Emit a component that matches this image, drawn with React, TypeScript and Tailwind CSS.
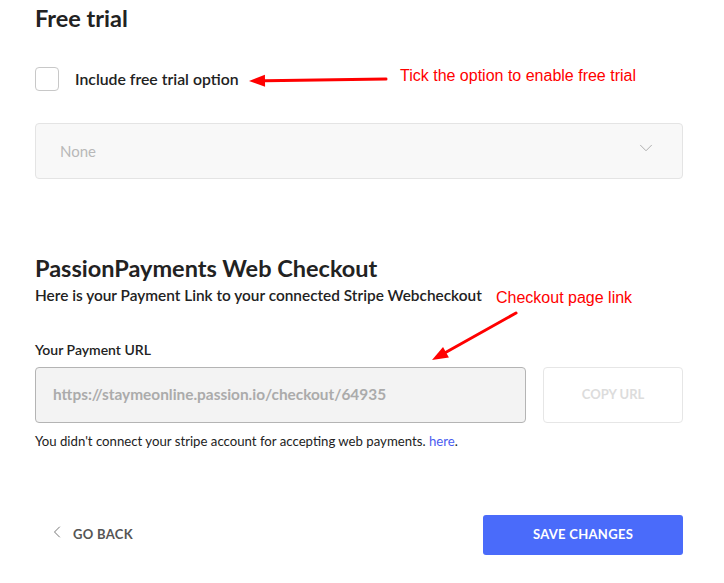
import { ChevronDown, ChevronLeft } from 'lucide-react'

const font = { fontFamily: 'Lato, "Liberation Sans", sans-serif' }

function RedArrow({ x1, y1, x2, y2 }: { x1: number; y1: number; x2: number; y2: number }) {
  // line plus a filled head pointing at (x2, y2)
  const ang = Math.atan2(y2 - y1, x2 - x1)
  const len = 16
  const half = 6
  const bx = x2 - len * Math.cos(ang)
  const by = y2 - len * Math.sin(ang)
  const px = -Math.sin(ang) * half
  const py = Math.cos(ang) * half
  return (
    <g>
      <line x1={x1} y1={y1} x2={bx} y2={by} stroke="#f00" strokeWidth={3} strokeLinecap="round" />
      <polygon points={`${x2},${y2} ${bx + px},${by + py} ${bx - px},${by - py}`} fill="#f00" />
    </g>
  )
}

export default function App() {
  return (
    <div className="relative w-[724px] h-[583px] bg-white text-[#222]" style={font}>
      <div className="pl-[35px] pr-[41px] w-[724px]">
        <h2 className="pt-[3px] text-[23.5px] leading-[30px] font-bold text-[#222]">Free trial</h2>

        <label className="mt-[34px] flex items-center gap-[16px] h-[24px]">
          <span className="w-[24px] h-[24px] rounded-[4px] border border-[#c8c8c8] bg-white" />
          <span className="text-[15.8px] font-semibold text-[#222]">Include free trial option</span>
        </label>

        <div className="mt-[32px] h-[56px] flex items-center justify-between rounded-[4px] border border-[#e4e4e4] bg-[#f8f8f8] pl-[24px] pr-[25px]">
          <span className="text-[15px] text-[#b8b8b8]">None</span>
          <ChevronDown className="w-[22px] h-[22px] text-[#a8a8a8] -mt-[6px]" strokeWidth={1} />
        </div>

        <h2 className="mt-[74px] text-[23.5px] leading-[30px] font-bold text-[#222]">PassionPayments Web Checkout</h2>
        <p className="mt-[2px] text-[15.4px] leading-[20px] font-semibold text-[#222]">
          Here is your Payment Link to your connected Stripe Webcheckout
        </p>

        <p className="mt-[36px] text-[14px] leading-[18px] font-semibold text-[#222]">Your Payment URL</p>

        <div className="mt-[8px] flex gap-[17px]">
          <div className="flex-1 h-[56px] flex items-center rounded-[4px] border border-[#b4b4b4] bg-[#f3f3f3] pl-[17px]">
            <span className="text-[15.4px] font-bold text-[#ababab]">https://staymeonline.passion.io/checkout/64935</span>
          </div>
          <button className="w-[140px] h-[56px] rounded-[4px] border border-[#e6e6e6] bg-white text-[13px] font-bold text-[#dcdcdc] uppercase">
            Copy URL
          </button>
        </div>

        <p className="mt-[9px] text-[13.2px] leading-[18px] text-[#222]">
          You didn't connect your stripe account for accepting web payments.{' '}
          <span className="text-[#4a5cf0]">here</span>.
        </p>

        <div className="mt-[65px] flex items-center justify-between">
          <div className="flex items-center gap-[6px] pl-[12px]">
            <ChevronLeft className="w-[20px] h-[20px] text-[#777] -mt-[6px]" strokeWidth={1.2} />
            <span className="text-[13px] font-bold text-[#555] tracking-[0.3px]">GO BACK</span>
          </div>
          <button className="w-[200px] h-[40px] rounded-[3px] bg-[#4a6bfa] text-white text-[13px] font-bold tracking-[0.3px]">
            SAVE CHANGES
          </button>
        </div>
      </div>

      <svg className="absolute inset-0 pointer-events-none" width={724} height={583}>
        <RedArrow x1={386} y1={79} x2={249} y2={81} />
        <RedArrow x1={516} y1={313} x2={432} y2={360} />
      </svg>
      <span
        className="absolute left-[400px] top-[66px] text-[16px] leading-[20px] text-[#f00]"
        style={{ fontFamily: '"Liberation Sans", Arial, sans-serif' }}
      >
        Tick the option to enable free trial
      </span>
      <span
        className="absolute left-[496px] top-[288px] text-[16px] leading-[20px] text-[#f00]"
        style={{ fontFamily: '"Liberation Sans", Arial, sans-serif' }}
      >
        Checkout page link
      </span>
    </div>
  )
}
